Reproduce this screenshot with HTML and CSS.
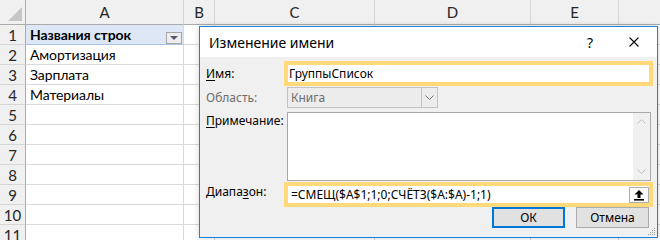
FILE: index.html
```html
<!DOCTYPE html>
<html lang="ru">
<head>
<meta charset="utf-8">
<link rel="stylesheet" href="styles.css">
</head>
<body>
<div class="sheet">
  <div class="hd corner"><span class="tri"></span></div>
  <div class="hd col">A</div>
  <div class="hd col">B</div>
  <div class="hd col">C</div>
  <div class="hd col">D</div>
  <div class="hd col">E</div>
  <div class="hd col"></div>

  <div class="hd rown">1</div>
  <div class="cell pivot-head"><span>Названия строк</span><span class="filter"><span class="ftri"></span></span></div>
  <div class="cell"></div><div class="cell"></div><div class="cell"></div><div class="cell"></div><div class="cell"></div>

  <div class="hd rown">2</div>
  <div class="cell txt">Амортизация</div>
  <div class="cell"></div><div class="cell"></div><div class="cell"></div><div class="cell"></div><div class="cell"></div>

  <div class="hd rown">3</div>
  <div class="cell txt">Зарплата</div>
  <div class="cell"></div><div class="cell"></div><div class="cell"></div><div class="cell"></div><div class="cell"></div>

  <div class="hd rown">4</div>
  <div class="cell txt">Материалы</div>
  <div class="cell"></div><div class="cell"></div><div class="cell"></div><div class="cell"></div><div class="cell"></div>

  <div class="hd rown">5</div>
  <div class="cell"></div><div class="cell"></div><div class="cell"></div><div class="cell"></div><div class="cell"></div><div class="cell"></div>
  <div class="hd rown">6</div>
  <div class="cell"></div><div class="cell"></div><div class="cell"></div><div class="cell"></div><div class="cell"></div><div class="cell"></div>
  <div class="hd rown">7</div>
  <div class="cell"></div><div class="cell"></div><div class="cell"></div><div class="cell"></div><div class="cell"></div><div class="cell"></div>
  <div class="hd rown">8</div>
  <div class="cell"></div><div class="cell"></div><div class="cell"></div><div class="cell"></div><div class="cell"></div><div class="cell"></div>
  <div class="hd rown">9</div>
  <div class="cell"></div><div class="cell"></div><div class="cell"></div><div class="cell"></div><div class="cell"></div><div class="cell"></div>
  <div class="hd rown">10</div>
  <div class="cell"></div><div class="cell"></div><div class="cell"></div><div class="cell"></div><div class="cell"></div><div class="cell"></div>
  <div class="hd rown">11</div>
  <div class="cell"></div><div class="cell"></div><div class="cell"></div><div class="cell"></div><div class="cell"></div><div class="cell"></div>
</div>

<div class="dialog">
  <div class="titlebar">
    <span class="title">Изменение имени</span>
    <span class="help">?</span>
    <svg class="close" width="10" height="10" viewBox="0 0 10 10"><path d="M0.5 0.5 L9.5 9.5 M9.5 0.5 L0.5 9.5" stroke="#000" stroke-width="1.1" fill="none"/></svg>
  </div>
  <div class="dbody">
    <div class="row r-name">
      <span class="lbl"><u>И</u>мя:</span>
      <div class="hl field-name">ГруппыСписок</div>
    </div>
    <div class="row r-scope">
      <span class="lbl dis">Область:</span>
      <div class="combo">
        <span class="combo-txt">Книга</span>
        <span class="combo-btn"><svg width="9" height="5" viewBox="0 0 9 5"><path d="M0.5 0.5 L4.5 4.5 L8.5 0.5" stroke="#6e6a80" stroke-width="1" fill="none"/></svg></span>
      </div>
    </div>
    <div class="row r-note">
      <span class="lbl top"><u>П</u>римечание:</span>
      <div class="textarea">
        <div class="scroll">
          <svg width="9" height="5" viewBox="0 0 9 5"><path d="M0.5 4.5 L4.5 0.5 L8.5 4.5" stroke="#c2c2c2" stroke-width="1" fill="none"/></svg>
          <svg width="9" height="5" viewBox="0 0 9 5"><path d="M0.5 0.5 L4.5 4.5 L8.5 0.5" stroke="#c2c2c2" stroke-width="1" fill="none"/></svg>
        </div>
      </div>
    </div>
    <div class="row r-range">
      <span class="lbl top2">Диапа<u>з</u>он:</span>
      <div class="hl field-range">
        <span class="formula">=СМЕЩ($A$1;1;0;СЧЁТЗ($A:$A)-1;1)</span>
        <span class="collapse"><svg width="12" height="12" viewBox="0 0 12 12"><path d="M6 1 L1.5 5.5 H4.5 V9 H7.5 V5.5 H10.5 Z" fill="#000"/><rect x="1" y="10" width="10" height="1.6" fill="#000"/></svg></span>
      </div>
    </div>
    <div class="buttons">
      <span class="btn ok">ОК</span>
      <span class="btn">Отмена</span>
    </div>
    <svg class="grip" width="10" height="10" viewBox="0 0 10 10">
      <rect x="8" y="2" width="1" height="1" fill="#a0a0a0"/>
      <rect x="6" y="4" width="1" height="1" fill="#a0a0a0"/><rect x="8" y="4" width="1" height="1" fill="#a0a0a0"/>
      <rect x="4" y="6" width="1" height="1" fill="#a0a0a0"/><rect x="6" y="6" width="1" height="1" fill="#a0a0a0"/><rect x="8" y="6" width="1" height="1" fill="#a0a0a0"/>
      <rect x="2" y="8" width="1" height="1" fill="#a0a0a0"/><rect x="4" y="8" width="1" height="1" fill="#a0a0a0"/><rect x="6" y="8" width="1" height="1" fill="#a0a0a0"/><rect x="8" y="8" width="1" height="1" fill="#a0a0a0"/>
    </svg>
  </div>
</div>
</body>
</html>
```

FILE: styles.css
```css
* { box-sizing: border-box; }
html, body { margin: 0; padding: 0; background: #fff; }
body { width: 660px; height: 240px; overflow: hidden; position: relative; }

.sheet {
  display: grid;
  grid-template-columns: 26px 158px 31px 160px 156px 88px 60px;
  grid-template-rows: 25px repeat(11, 20px);
  font-family: "Lato", "Liberation Sans", sans-serif;
  font-size: 14px;
  color: #000;
}
.hd {
  background: #f0f0f0;
  border-right: 1px solid #d5d5d5;
  border-bottom: 1px solid #d5d5d5;
  color: #262626;
  font-size: 15px;
  display: flex;
  align-items: center;
  justify-content: center;
}
.hd.col { border-bottom-color: #ababab; }
.hd.rown { border-right-color: #ababab; }
.corner { border-right-color: #ababab; border-bottom-color: #ababab; position: relative; }
.tri {
  position: absolute; right: 3px; bottom: 3px;
  width: 0; height: 0;
  border-left: 14px solid transparent;
  border-bottom: 14px solid #c6c6c6;
}
.cell {
  border-right: 1px solid #d9d9d9;
  border-bottom: 1px solid #d9d9d9;
  display: flex;
  align-items: center;
  padding-left: 4px;
  white-space: nowrap;
  letter-spacing: -0.1px;
}
.pivot-head {
  background: #dde7f5;
  border-bottom-color: #a9c1e4;
  font-weight: 700;
  justify-content: space-between;
  padding-right: 1px;
  align-items: center;
}
.filter {
  width: 16px; height: 12px;
  margin-top: 7px;
  background: #ededed;
  border: 1px solid #a6a6a6;
  display: flex; align-items: center; justify-content: center;
}
.ftri {
  width: 0; height: 0;
  border-left: 4px solid transparent;
  border-right: 4px solid transparent;
  border-top: 4px solid #5b5670;
}

/* dialog overlay */
.dialog {
  position: absolute;
  left: 199px; top: 26px;
  width: 459px; height: 212px;
  border: 1px solid #1883d7;
  background: #f0f0f0;
  box-shadow: 0 0 6px rgba(0,0,0,0.18);
  font-family: "Noto Sans", "Liberation Sans", sans-serif;
  font-size: 12px;
  color: #000;
  display: flex;
  flex-direction: column;
}
.titlebar {
  height: 30px;
  background: #fff;
  display: flex;
  align-items: center;
  padding-left: 9px;
}
.title { font-size: 14px; flex: 1; }
.help { font-size: 14px; margin-right: 36px; }
.close { margin-right: 18px; }

.dbody {
  flex: 1;
  position: relative;
  padding: 0 4px 0 6px;
  display: flex;
  flex-direction: column;
}
.row {
  display: grid;
  grid-template-columns: 78px 1fr;
}
.lbl { align-self: center; white-space: nowrap; }
.lbl.top { align-self: start; padding-top: 0; }
.lbl.top2 { align-self: start; padding-top: 1px; }
.lbl.dis { color: #6d6d6d; }
.lbl u { text-decoration: underline; text-underline-offset: 2px; }

.hl {
  border: 4px solid #ffd97a;
  background: #fff;
  display: flex;
  align-items: center;
  white-space: nowrap;
}
.r-name { margin-top: 4px; height: 23px; }
.field-name { padding-left: 1px; }

.r-scope { margin-top: 3px; height: 21px; }
.combo {
  margin-left: 3px;
  width: 151px;
  border: 1px solid #c2c2c2;
  background: #ececec;
  display: flex;
  color: #6d6d6d;
}
.combo-txt { flex: 1; padding-left: 3px; display: flex; align-items: center; }
.combo-btn {
  width: 16px;
  border-left: 1px solid #c2c2c2;
  display: flex; align-items: center; justify-content: center;
}

.r-note { margin-top: 4px; height: 69px; }
.textarea {
  margin-left: 3px;
  margin-right: 2px;
  border: 1px solid #a8a8a8;
  background: #fff;
  display: flex;
  justify-content: flex-end;
}
.scroll {
  width: 17px;
  background: #f0f0f0;
  display: flex;
  flex-direction: column;
  justify-content: space-between;
  align-items: center;
  padding: 6px 0;
}

.r-range { margin-top: 1px; height: 25px; }
.field-range { justify-content: space-between; padding-left: 3px; }
.collapse {
  width: 20px; height: 16px;
  border: 1px solid #adadad;
  background: #fdfdfd;
  display: flex; align-items: center; justify-content: center;
}

.buttons {
  height: 21px;
  display: flex;
  justify-content: flex-end;
  gap: 11px;
  padding-right: 4px;
}
.btn {
  width: 73px;
  border: 1px solid #adadad;
  background: #e1e1e1;
  display: flex; align-items: center; justify-content: center;
}
.btn.ok { border: 2px solid #0078d7; }
.grip { position: absolute; right: 1px; bottom: 1px; }
```
